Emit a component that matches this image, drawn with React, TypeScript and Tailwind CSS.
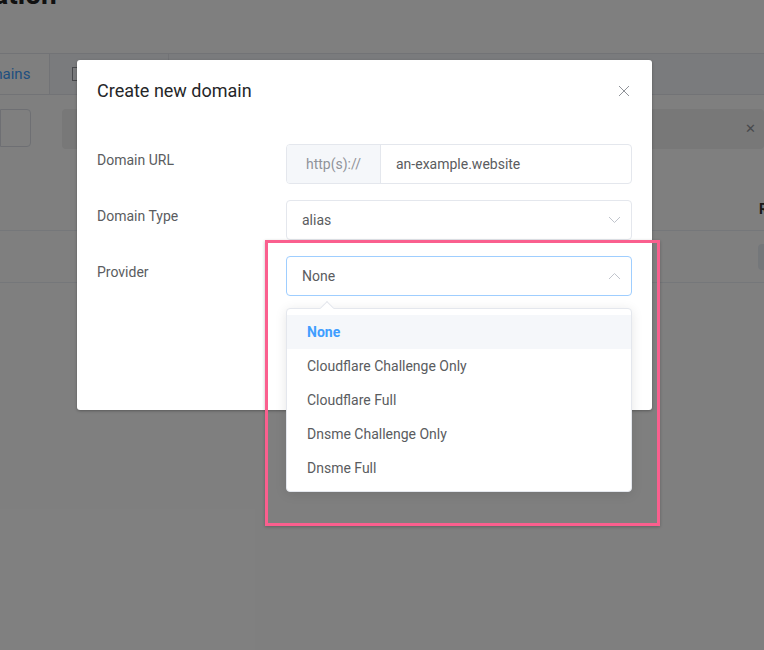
import React from 'react';

const providers = ['None', 'Cloudflare Challenge Only', 'Cloudflare Full', 'Dnsme Challenge Only', 'Dnsme Full'];

const Chevron = ({ up = false }: { up?: boolean }) => (
  <svg width="13" height="8" viewBox="0 0 13 8" className="text-[#c0c4cc]">
    <path d={up ? 'M1 7 L6.5 1.5 L12 7' : 'M1 1 L6.5 6.5 L12 1'} fill="none" stroke="currentColor" strokeWidth="1" />
  </svg>
);

const Background: React.FC = () => (
  <div className="flex h-[650px] w-[764px] flex-col overflow-hidden bg-white">
    <div className="flex h-[53px] shrink-0 flex-col">
      <div className="-ml-[115px] -mt-[26px] text-[28px] font-bold text-[#222]">Configuration</div>
    </div>
    <div className="flex h-[42px] shrink-0 border-y border-[#e4e7ed] bg-[#f5f7fa]">
      <div className="flex w-[49px] items-center bg-white text-[15px] text-[#409eff]">
        <span className="-ml-[29px]">Domains</span>
      </div>
      <div className="flex w-[120px] items-center border-x border-[#e4e7ed] pl-[22px] text-[15px] text-[#606266]">
        <span className="h-[14px] w-[12px] border border-[#909399]"></span>
        <span className="ml-2">Logs</span>
      </div>
    </div>
    <div className="mt-[14px] flex h-[40px] shrink-0 gap-[31px]">
      <div className="h-[38px] w-[31px] rounded-r border border-[#dcdfe6]"></div>
      <div className="flex flex-1 items-center justify-end rounded bg-[#f0f0f0] pr-[8px] text-[#909399]">
        <span className="text-[13px]">✕</span>
      </div>
    </div>
    <div className="mt-[40px] flex h-[42px] shrink-0 items-center justify-end border-b border-[#ebeef5] text-[14px] font-bold text-[#333]">
      <span className="-mr-[4px]">R</span>
    </div>
    <div className="flex h-[52px] shrink-0 items-center justify-end border-b border-[#ebeef5]">
      <div className="-mr-[10px] h-[26px] w-[16px] rounded bg-[#e9eef5]"></div>
    </div>
  </div>
);

export default function App() {
  return (
    <div className="relative h-[650px] w-[764px] overflow-hidden" style={{ fontFamily: 'Roboto, "Noto Sans", sans-serif' }}>
      <Background />
      <div className="absolute inset-0 bg-black/50"></div>

      <div className="absolute left-[77px] top-[60px] h-[350px] w-[575px] rounded-[3px] bg-white shadow-[0_1px_3px_rgba(0,0,0,0.3)]">
        <div className="flex items-center justify-between px-5 pt-[19px]">
          <h2 className="text-[18px] leading-6 text-[#252628]">Create new domain</h2>
          <svg width="12" height="12" viewBox="0 0 12 12" className="mr-[2px] text-[#909399]">
            <path d="M1 1 L11 11 M11 1 L1 11" stroke="currentColor" strokeWidth="1" />
          </svg>
        </div>

        <div className="mt-[41px] flex flex-col gap-4 px-5 text-[14px]">
          <div className="flex items-start">
            <label className="w-[189px] pt-[6px] leading-5 text-[#5a5c60]">Domain URL</label>
            <div className="flex h-10 flex-1 overflow-hidden rounded border border-[#e4e7ed]">
              <div className="flex w-[94px] items-center justify-center border-r border-[#e4e7ed] bg-[#f5f7fa] text-[#909399]">http(s)://</div>
              <div className="flex flex-1 items-center pl-[15px] text-[#5a5c60]">an-example.website</div>
            </div>
          </div>
          <div className="flex items-start">
            <label className="w-[189px] pt-[6px] leading-5 text-[#5a5c60]">Domain Type</label>
            <div className="flex h-10 flex-1 items-center justify-between rounded border border-[#e4e7ed] pl-[15px] pr-[10px] text-[#5a5c60]">
              <span>alias</span>
              <Chevron />
            </div>
          </div>
          <div className="flex items-start">
            <label className="w-[189px] pt-[6px] leading-5 text-[#5a5c60]">Provider</label>
            <div className="flex h-10 flex-1 items-center justify-between rounded border border-[#9fceff] pl-[15px] pr-[10px] text-[#5a5c60]">
              <span>None</span>
              <Chevron up />
            </div>
          </div>
        </div>
      </div>

      <div className="absolute left-[286px] top-[308px] w-[346px] rounded border border-[#e4e7ed] bg-white py-[6px] shadow-[0_2px_12px_rgba(0,0,0,0.1)]">
        <div className="absolute -top-[6px] left-[35px] h-[10px] w-[10px] rotate-45 border-l border-t border-[#e4e7ed] bg-white"></div>
        {providers.map((p, i) => (
          <div
            key={p}
            className={
              i === 0
                ? 'relative flex h-[34px] items-center bg-[#f5f7fa] px-5 text-[14px] font-bold text-[#409eff]'
                : 'relative flex h-[34px] items-center px-5 text-[14px] text-[#5a5c60]'
            }
          >
            {p}
          </div>
        ))}
      </div>

      <div className="pointer-events-none absolute left-[265px] top-[240px] h-[286px] w-[395px] border-[3px] border-[#fa5f8e] shadow-[0_1px_3px_rgba(0,0,0,0.25)]"></div>
    </div>
  );
}
